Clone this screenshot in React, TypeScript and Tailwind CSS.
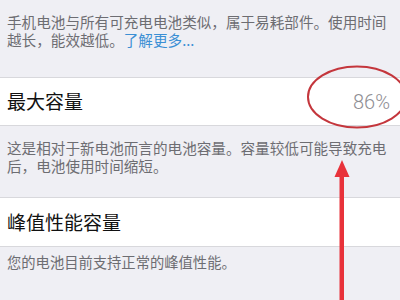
import React from "react";

export default function App() {
  const font = { fontFamily: '"Noto Sans CJK SC", "Noto Sans", sans-serif' };
  return (
    <div
      className="relative w-[400px] h-[300px] overflow-hidden bg-[#efeff4]"
      style={font}
    >
      <div className="flex flex-col">
        <div className="h-[77px] pt-[13px] px-[7px] text-[14.6px] leading-[17.5px] text-[#6d6d72]">
          <span>手机电池与所有可充电电池类似，属于易耗部件。使用时间越长，能效越低。</span>
          <span className="text-[#3b8fd4]">了解更多...</span>
        </div>
        <div className="h-[49px] bg-white border-t border-b border-[#d8d8dc] flex items-center justify-between pl-[7px] pr-[10px]">
          <span className="text-[19px] text-[#111111]">最大容量</span>
          <span className="text-[20px] font-light text-[#8e8e93] [font-family:Roboto,sans-serif]">
            86%
          </span>
        </div>
        <div className="h-[71px] pt-[13px] px-[7px] text-[14.6px] leading-[17.5px] text-[#6d6d72]">
          这是相对于新电池而言的电池容量。容量较低可能导致充电后，电池使用时间缩短。
        </div>
        <div className="h-[50px] bg-white border-t border-b border-[#d8d8dc] flex items-center pl-[7px]">
          <span className="text-[19px] text-[#111111]">峰值性能容量</span>
        </div>
        <div className="pt-[6px] px-[7px] text-[14.3px] leading-[17.5px] text-[#6d6d72]">
          您的电池目前支持正常的峰值性能。
        </div>
      </div>
      <svg
        className="absolute left-0 top-0"
        width="400"
        height="300"
        viewBox="0 0 400 300"
      >
        <ellipse
          cx="357"
          cy="97"
          rx="49"
          ry="30.5"
          fill="none"
          stroke="#c4363c"
          strokeWidth="2"
        />
        <rect x="339.5" y="172" width="4.5" height="130" fill="#e8323a" />
        <polygon points="342,160 334.5,177 349.5,177" fill="#e8323a" />
      </svg>
    </div>
  );
}
